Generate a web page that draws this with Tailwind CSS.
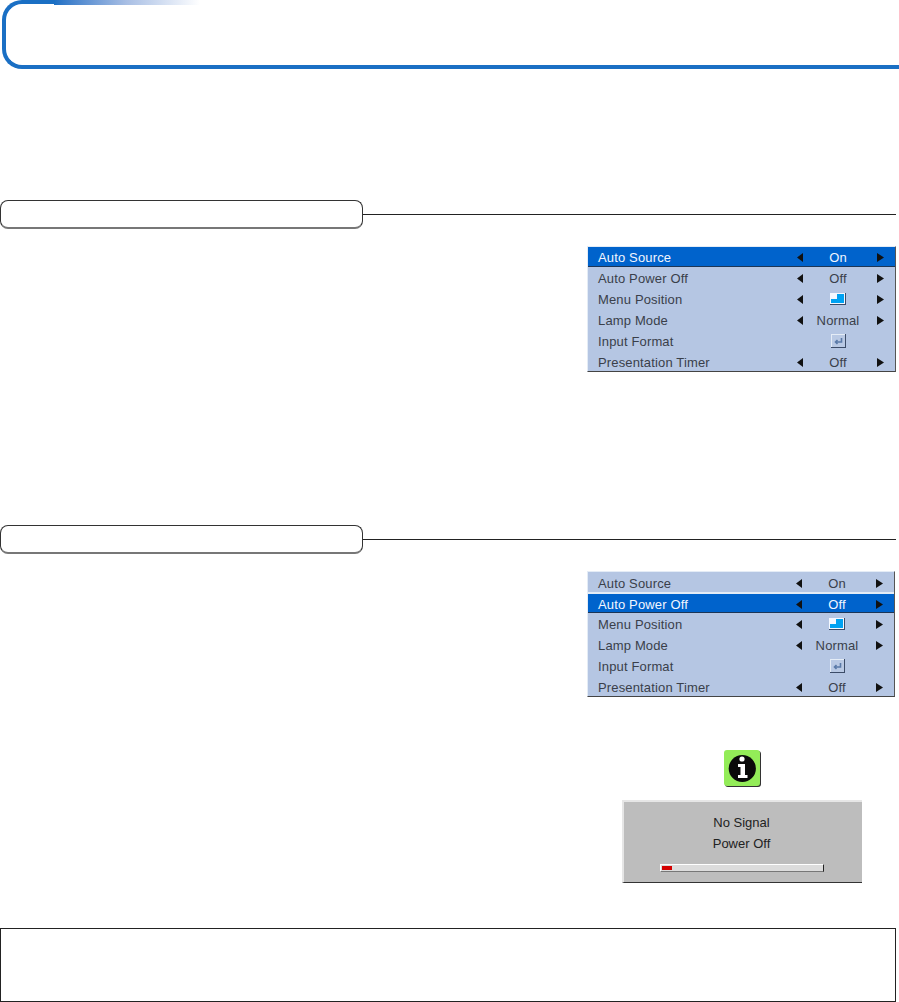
<!DOCTYPE html>
<html lang="en">
<head><meta charset="utf-8"/><title>Setup</title><script src="https://cdn.jsdelivr.net/npm/@tailwindcss/browser@4"></script></head>
<body class="bg-white text-[#3a3f4a] font-['Liberation_Sans',sans-serif]">
<div class="w-[899px] h-[1002px] overflow-hidden flex flex-col">

<header class="flex h-[69px] ml-[2px]">
  <div class="w-[52px] border-l-4 border-t-4 border-b-4 border-[#1a6fc4] rounded-l-[20px]"></div>
  <div class="flex-1 flex flex-col justify-between border-b-4 border-[#1a6fc4]">
    <div class="w-[146px] h-[5px] bg-gradient-to-r from-[#1a6fc4] via-[#a9bfe4] to-white"></div>
  </div>
</header>

<!-- section 1 -->
<div class="flex items-center mt-[131px] pr-[3px]">
  <div class="w-[363px] h-[29px] border border-[#333] border-b-2 border-b-[#777] rounded-[8px]"></div>
  <div class="flex-1 h-px bg-[#222]"></div>
</div>
<div class="ml-[587px] mt-[17px] w-[309px] h-[126px] bg-[#b5c6e3] border-t border-l border-t-[#e4ecf6] border-l-[#e4ecf6] border-r border-b border-r-[#555] border-b-[#444] text-[13px] tracking-[0.15px] leading-[21px]">
  <div class="h-[20px] bg-[#0063cc] border-b border-[#1c3556] text-[#f2f6ff] flex items-center pl-[10px] pr-[11px]">
    <span class="flex-1 pt-[2px]">Auto Source</span>
    <svg class="w-[6px] h-[9px] mt-[2px]" viewBox="0 0 6 9"><path d="M6 0V9L0 4.5Z" fill="#111"/></svg>
    <span class="w-[70px] text-center pt-[2px]">On</span>
    <svg class="w-[7px] h-[9px] ml-[4px] mt-[2px]" viewBox="0 0 7 9"><path d="M0 0V9L7 4.5Z" fill="#111"/></svg>
  </div>
  <div class="h-[21px] flex items-center pl-[10px] pr-[11px]">
    <span class="flex-1 pt-[2px]">Auto Power Off</span>
    <svg class="w-[6px] h-[9px] mt-[2px]" viewBox="0 0 6 9"><path d="M6 0V9L0 4.5Z" fill="#111"/></svg>
    <span class="w-[70px] text-center pt-[2px]">Off</span>
    <svg class="w-[7px] h-[9px] ml-[4px] mt-[2px]" viewBox="0 0 7 9"><path d="M0 0V9L7 4.5Z" fill="#111"/></svg>
  </div>
  <div class="h-[21px] flex items-center pl-[10px] pr-[11px]">
    <span class="flex-1 pt-[2px]">Menu Position</span>
    <svg class="w-[6px] h-[9px] mt-[2px]" viewBox="0 0 6 9"><path d="M6 0V9L0 4.5Z" fill="#111"/></svg>
    <span class="w-[70px] flex justify-center">
      <svg class="w-[16px] h-[12px]" viewBox="0 0 16 12"><rect width="15" height="11" fill="#f4f8ff"/><path d="M7 1H14V10H1V6H7Z" fill="#00a2f2"/><path d="M15 0H16V12H0V11H15Z" fill="#3c4c68"/></svg>
    </span>
    <svg class="w-[7px] h-[9px] ml-[4px] mt-[2px]" viewBox="0 0 7 9"><path d="M0 0V9L7 4.5Z" fill="#111"/></svg>
  </div>
  <div class="h-[21px] flex items-center pl-[10px] pr-[11px]">
    <span class="flex-1 pt-[2px]">Lamp Mode</span>
    <svg class="w-[6px] h-[9px] mt-[2px]" viewBox="0 0 6 9"><path d="M6 0V9L0 4.5Z" fill="#111"/></svg>
    <span class="w-[70px] text-center pt-[2px]">Normal</span>
    <svg class="w-[7px] h-[9px] ml-[4px] mt-[2px]" viewBox="0 0 7 9"><path d="M0 0V9L7 4.5Z" fill="#111"/></svg>
  </div>
  <div class="h-[21px] flex items-center pl-[10px] pr-[11px]">
    <span class="flex-1 pt-[2px]">Input Format</span>
    <span class="w-[6px]"></span>
    <span class="w-[70px] flex justify-center">
      <svg class="w-[15px] h-[14px]" viewBox="0 0 15 14"><rect width="15" height="14" fill="#3c4c68"/><rect width="14" height="13" fill="#e4ecf6"/><rect x="1" y="1" width="13" height="12" fill="#b9c9e4"/><path d="M10.5 4V8H4.5M6.5 6L4.5 8L6.5 10" fill="none" stroke="#5a7aa8" stroke-width="1.6"/></svg>
    </span>
    <span class="w-[7px] ml-[4px]"></span>
  </div>
  <div class="h-[21px] flex items-center pl-[10px] pr-[11px]">
    <span class="flex-1 pt-[2px]">Presentation Timer</span>
    <svg class="w-[6px] h-[9px] mt-[2px]" viewBox="0 0 6 9"><path d="M6 0V9L0 4.5Z" fill="#111"/></svg>
    <span class="w-[70px] text-center pt-[2px]">Off</span>
    <svg class="w-[7px] h-[9px] ml-[4px] mt-[2px]" viewBox="0 0 7 9"><path d="M0 0V9L7 4.5Z" fill="#111"/></svg>
  </div>
</div>

<!-- section 2 -->
<div class="flex items-center mt-[153px] pr-[3px]">
  <div class="w-[363px] h-[29px] border border-[#333] border-b-2 border-b-[#777] rounded-[8px]"></div>
  <div class="flex-1 h-px bg-[#222]"></div>
</div>
<div class="ml-[587px] mt-[17px] w-[308px] h-[126px] bg-[#b5c6e3] border-t border-l border-t-[#e4ecf6] border-l-[#e4ecf6] border-r border-b border-r-[#555] border-b-[#444] text-[13px] tracking-[0.15px] leading-[21px]">
  <div class="h-[20px] flex items-center pl-[10px] pr-[11px]">
    <span class="flex-1 pt-[2px]">Auto Source</span>
    <svg class="w-[6px] h-[9px] mt-[2px]" viewBox="0 0 6 9"><path d="M6 0V9L0 4.5Z" fill="#111"/></svg>
    <span class="w-[70px] text-center pt-[2px]">On</span>
    <svg class="w-[7px] h-[9px] ml-[4px] mt-[2px]" viewBox="0 0 7 9"><path d="M0 0V9L7 4.5Z" fill="#111"/></svg>
  </div>
  <div class="h-[21px] bg-[#0063cc] border-t-2 border-t-[#e4ecf6] border-b border-b-[#1c3556] text-[#f2f6ff] flex items-center pl-[10px] pr-[11px]">
    <span class="flex-1 pt-[2px]">Auto Power Off</span>
    <svg class="w-[6px] h-[9px] mt-[2px]" viewBox="0 0 6 9"><path d="M6 0V9L0 4.5Z" fill="#111"/></svg>
    <span class="w-[70px] text-center pt-[2px]">Off</span>
    <svg class="w-[7px] h-[9px] ml-[4px] mt-[2px]" viewBox="0 0 7 9"><path d="M0 0V9L7 4.5Z" fill="#111"/></svg>
  </div>
  <div class="h-[21px] flex items-center pl-[10px] pr-[11px]">
    <span class="flex-1 pt-[2px]">Menu Position</span>
    <svg class="w-[6px] h-[9px] mt-[2px]" viewBox="0 0 6 9"><path d="M6 0V9L0 4.5Z" fill="#111"/></svg>
    <span class="w-[70px] flex justify-center">
      <svg class="w-[16px] h-[12px]" viewBox="0 0 16 12"><rect width="15" height="11" fill="#f4f8ff"/><path d="M7 1H14V10H1V6H7Z" fill="#00a2f2"/><path d="M15 0H16V12H0V11H15Z" fill="#3c4c68"/></svg>
    </span>
    <svg class="w-[7px] h-[9px] ml-[4px] mt-[2px]" viewBox="0 0 7 9"><path d="M0 0V9L7 4.5Z" fill="#111"/></svg>
  </div>
  <div class="h-[21px] flex items-center pl-[10px] pr-[11px]">
    <span class="flex-1 pt-[2px]">Lamp Mode</span>
    <svg class="w-[6px] h-[9px] mt-[2px]" viewBox="0 0 6 9"><path d="M6 0V9L0 4.5Z" fill="#111"/></svg>
    <span class="w-[70px] text-center pt-[2px]">Normal</span>
    <svg class="w-[7px] h-[9px] ml-[4px] mt-[2px]" viewBox="0 0 7 9"><path d="M0 0V9L7 4.5Z" fill="#111"/></svg>
  </div>
  <div class="h-[21px] flex items-center pl-[10px] pr-[11px]">
    <span class="flex-1 pt-[2px]">Input Format</span>
    <span class="w-[6px]"></span>
    <span class="w-[70px] flex justify-center">
      <svg class="w-[15px] h-[14px]" viewBox="0 0 15 14"><rect width="15" height="14" fill="#3c4c68"/><rect width="14" height="13" fill="#e4ecf6"/><rect x="1" y="1" width="13" height="12" fill="#b9c9e4"/><path d="M10.5 4V8H4.5M6.5 6L4.5 8L6.5 10" fill="none" stroke="#5a7aa8" stroke-width="1.6"/></svg>
    </span>
    <span class="w-[7px] ml-[4px]"></span>
  </div>
  <div class="h-[21px] flex items-center pl-[10px] pr-[11px]">
    <span class="flex-1 pt-[2px]">Presentation Timer</span>
    <svg class="w-[6px] h-[9px] mt-[2px]" viewBox="0 0 6 9"><path d="M6 0V9L0 4.5Z" fill="#111"/></svg>
    <span class="w-[70px] text-center pt-[2px]">Off</span>
    <svg class="w-[7px] h-[9px] ml-[4px] mt-[2px]" viewBox="0 0 7 9"><path d="M0 0V9L7 4.5Z" fill="#111"/></svg>
  </div>
</div>

<!-- info icon and message -->
<svg class="ml-[724px] mt-[53px] w-[37px] h-[37px]" viewBox="0 0 37 37">
  <rect x="1" y="1" width="36" height="36" rx="3" fill="#333"/>
  <rect width="36" height="36" rx="3" fill="#93ec58"/>
  <circle cx="18.3" cy="18.5" r="13.6" fill="#0a0a0a"/>
  <circle cx="18" cy="9" r="2.6" fill="#fff"/>
  <path d="M14 14H21V25H23.5V28H14V25H16.5V17H14Z" fill="#fff"/>
</svg>
<div class="ml-[622px] mt-[13px] w-[240px] h-[83px] bg-[#bdbdbd] border-t-2 border-l-2 border-t-[#e6e6e6] border-l-[#e6e6e6] border-b border-b-[#333] flex flex-col items-center pr-[3px] text-[13px] text-[#222]">
  <span class="h-[21px] mt-[10px] leading-[21px]">No Signal</span>
  <span class="h-[21px] leading-[21px]">Power Off</span>
  <div class="mt-[10px] w-[164px] h-[8px] bg-[#dcdcdc] border-t border-l border-t-white border-l-white border-r border-b border-r-[#222] border-b-[#777] pl-[1px] pt-[1px]">
    <div class="w-[10px] h-[4px] bg-[#d40000]"></div>
  </div>
</div>

<!-- note box -->
<div class="mt-[45px] w-[896px] h-[74px] border border-[#222]"></div>

</div>
</body>
</html>
